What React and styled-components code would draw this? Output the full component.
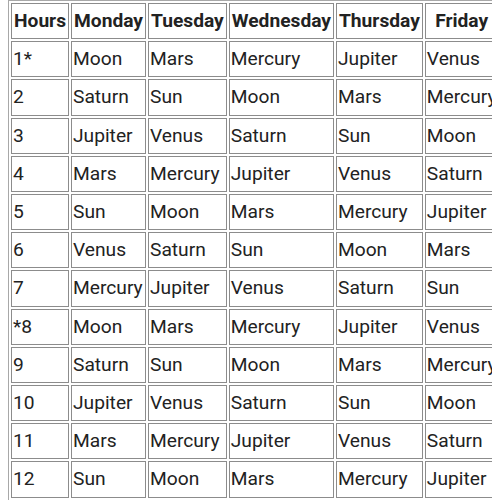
import React from "react";
import styled, { createGlobalStyle } from "styled-components";

const Global = createGlobalStyle`
  html, body { margin: 0; padding: 0; background: #fff; }
  body { font-family: Roboto, "Noto Sans", sans-serif; }
`;

const Viewport = styled.div`
  margin-left: 8px;
  width: 484px;
  height: 500px;
  overflow: hidden;
`;

const Table = styled.table`
  border: 1px solid #a8a8a8;
  border-spacing: 2px;
  color: #222;
  font-size: 19.2px;
  line-height: 32.2px;
`;

const Head = styled.th`
  border: 1px solid #8c8c8c;
  padding: 1px 2px;
  font-weight: 700;
  text-align: center;
  white-space: nowrap;
`;

const Cell = styled.td`
  border: 1px solid #8c8c8c;
  padding: 1px 1px;
  text-align: left;
  white-space: nowrap;
`;

const days = ["Monday", "Tuesday", "Wednesday", "Thursday", "Friday", "Saturday", "Sunday"];
const chaldean = ["Saturn", "Jupiter", "Mars", "Sun", "Venus", "Mercury", "Moon"];
const dayStart = { Monday: 6, Tuesday: 2, Wednesday: 5, Thursday: 1, Friday: 4, Saturday: 0, Sunday: 3 };
const labels = ["1*", "2", "3", "4", "5", "6", "7", "*8", "9", "10", "11", "12", "13"];

export default function App() {
  return (
    <>
      <Global />
      <Viewport>
        <Table>
          <thead>
            <tr>
              <Head>Hours</Head>
              {days.map((d) => (
                <Head key={d}>{d}</Head>
              ))}
            </tr>
          </thead>
          <tbody>
            {labels.map((l, i) => (
              <tr key={l}>
                <Cell>{l}</Cell>
                {days.map((d) => (
                  <Cell key={d}>{chaldean[(dayStart[d] + i) % 7]}</Cell>
                ))}
              </tr>
            ))}
          </tbody>
        </Table>
      </Viewport>
    </>
  );
}
